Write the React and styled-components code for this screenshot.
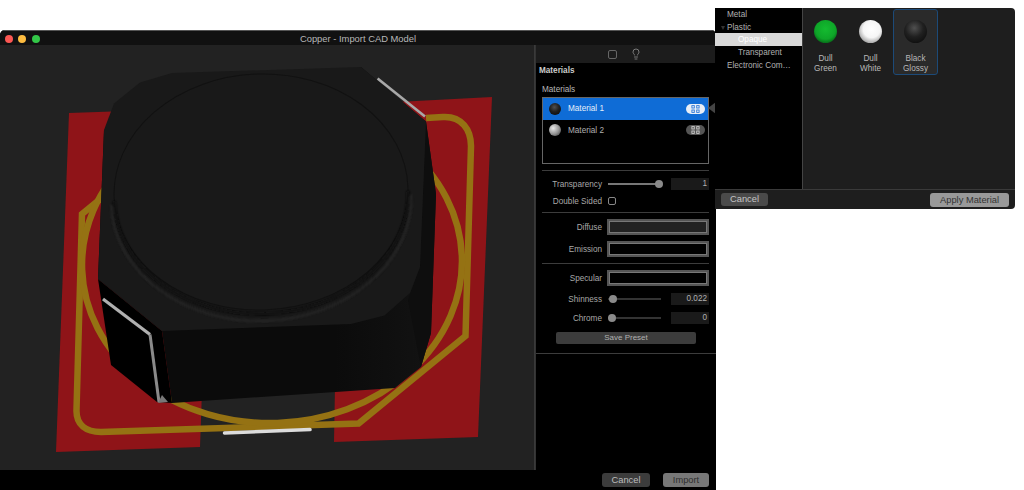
import React from 'react';
import styled, { createGlobalStyle } from 'styled-components';
import { Lightbulb } from 'lucide-react';

const Global = createGlobalStyle`
  html, body { margin: 0; padding: 0; background: #fff; }
  body { font-family: "Liberation Sans", Arial, sans-serif; }
  * { box-sizing: border-box; }
`;

const Page = styled.div`
  position: relative;
  width: 1024px;
  height: 490px;
  padding-top: 30px;
  overflow: hidden;
`;

const MainWindow = styled.div`
  width: 716px;
  height: 460px;
  display: flex;
  flex-direction: column;
  background: #000;
  border-radius: 5px 5px 0 0;
  overflow: hidden;
`;

const TitleBar = styled.div`
  position: relative;
  height: 15px;
  flex: none;
  display: flex;
  align-items: center;
  justify-content: center;
  background: #111;
  border-top: 1px solid #555;
  color: #b8b8b8;
  font-size: 9.4px;
`;

const Lights = styled.div`
  position: absolute;
  left: 5px;
  top: 3.5px;
  display: flex;
  gap: 5.4px;
`;

const Light = styled.span`
  width: 8px;
  height: 8px;
  border-radius: 50%;
  background: ${p => p.$color};
`;

const Body = styled.div`
  height: 425px;
  flex: none;
  display: flex;
`;

const Viewport = styled.div`
  width: 535px;
  flex: none;
  background: #222;
  border-right: 1px solid #3a3a3a;
  svg { display: block; }
`;

const Sidebar = styled.div`
  flex: 1;
  position: relative;
  display: flex;
  flex-direction: column;
  background: #000;
  border-left: 1px solid #333;
  color: #b0b0b0;
  font-size: 8.2px;
`;

const Toolbar = styled.div`
  height: 18px;
  flex: none;
  display: flex;
  align-items: center;
  justify-content: center;
  gap: 13px;
  padding-right: 3px;
  background: #1c1c1c;
  color: #777;
`;

const SquareIcon = styled.span`
  width: 9px;
  height: 9px;
  border: 1px solid #666;
  border-radius: 2px;
`;

const MainHeading = styled.div`
  height: 14px;
  padding: 1px 0 0 3px;
  line-height: 14px;
  font-weight: bold;
  color: #cccccc;
`;

const Inner = styled.div`
  padding: 0 7px 0 6px;
`;

const SubHeading = styled.div`
  height: 14px;
  margin-top: 5px;
  padding-top: 1px;
  line-height: 14px;
  color: #b8b8b8;
`;

const MaterialList = styled.div`
  height: 67px;
  margin-top: 1px;
  border: 1px solid #666;
`;

const MaterialRow = styled.div`
  height: 21.5px;
  display: flex;
  align-items: center;
  padding: 0 3px 0 6px;
  background: ${p => (p.$selected ? '#0f6cd6' : 'transparent')};
  color: ${p => (p.$selected ? '#e4eefa' : '#b0b0b0')};
`;

const RowSphere = styled.span`
  width: 12px;
  height: 12px;
  flex: none;
  border-radius: 50%;
  margin-right: 7px;
  background: ${p => p.$fill};
`;

const Badge = styled.span`
  margin-left: auto;
  width: 19px;
  height: 10px;
  display: flex;
  align-items: center;
  justify-content: center;
  border-radius: 5px;
  background: ${p => (p.$selected ? '#e8eef6' : '#555')};
  color: ${p => (p.$selected ? '#2c78d8' : '#ccc')};
`;

const Pointer = styled.span`
  position: absolute;
  right: 0;
  top: 57px;
  width: 0;
  height: 0;
  border-style: solid;
  border-width: 6.5px 8px 6.5px 0;
  border-color: transparent #444 transparent transparent;
`;

const Separator = styled.div`
  height: 1px;
  margin-top: ${p => p.$top}px;
  background: #3c3c3c;
`;

const PropRow = styled.div`
  height: ${p => p.$height || 12}px;
  margin-top: ${p => p.$top}px;
  display: grid;
  grid-template-columns: 60px 1fr;
  column-gap: 5px;
  align-items: center;
`;

const PropLabel = styled.div`
  text-align: right;
  color: #a8a8a8;
`;

const SliderBox = styled.div`
  display: flex;
  align-items: center;
`;

const Track = styled.div`
  position: relative;
  width: 53px;
  height: 2px;
  flex: none;
  margin-left: 1px;
  background: ${p => p.$color};
`;

const Thumb = styled.span`
  position: absolute;
  top: -3px;
  left: ${p => p.$at}px;
  width: 8px;
  height: 8px;
  border-radius: 50%;
  background: #8a8a8a;
`;

const ValueBox = styled.div`
  margin-left: auto;
  width: 38px;
  height: 12px;
  padding-right: 2px;
  background: #1a1a1a;
  color: #b0b0b0;
  line-height: 12px;
  text-align: right;
`;

const CheckBox = styled.span`
  width: 8px;
  height: 8px;
  margin-left: 1px;
  border: 1px solid #888;
  border-radius: 2px;
`;

const Swatch = styled.div`
  height: 16px;
  border: 3px solid #555;
  background: ${p => p.$fill};
  outline: 1px solid #777;
  outline-offset: -3px;
`;

const SavePreset = styled.div`
  height: 12px;
  width: 140px;
  margin: 8px 0 0 14px;
  border-radius: 2px;
  background: #3c3c3c;
  color: #b0b0b0;
  font-size: 8px;
  line-height: 12px;
  text-align: center;
`;

const FullSeparator = styled.div`
  height: 1px;
  margin-top: 9px;
  background: #3c3c3c;
`;

const Footer = styled.div`
  flex: 1;
  display: flex;
  align-items: center;
  justify-content: flex-end;
  gap: 13px;
  padding: 0 7px 0 0;
  background: #000;
`;

const Button = styled.div`
  width: ${p => p.$width}px;
  height: ${p => p.$height || 14}px;
  border-radius: 3px;
  background: ${p => p.$fill};
  color: ${p => p.$ink};
  font-size: 9.3px;
  line-height: ${p => p.$height || 14}px;
  text-align: center;
`;

const Popup = styled.div`
  position: absolute;
  left: 715px;
  top: 8px;
  width: 300px;
  height: 201px;
  display: flex;
  flex-direction: column;
  background: #1e1e1e;
  border-radius: 0 4px 4px 0;
  overflow: hidden;
  font-size: 8.2px;
`;

const PopupMain = styled.div`
  height: 181px;
  flex: none;
  display: flex;
`;

const Tree = styled.div`
  width: 88px;
  flex: none;
  background: #000;
  border-right: 1px solid #444;
`;

const TreeRow = styled.div`
  position: relative;
  height: 12.7px;
  padding-left: ${p => p.$indent}px;
  line-height: 14px;
  color: ${p => (p.$selected ? '#fff' : '#b0b0b0')};
  background: ${p => (p.$selected ? '#d8d8d8' : 'transparent')};
  white-space: nowrap;
`;

const Disclosure = styled.span`
  position: absolute;
  left: 6px;
  top: 5px;
  width: 0;
  height: 0;
  border-style: solid;
  border-width: 4px 2.5px 0 2.5px;
  border-color: #333 transparent transparent transparent;
`;

const Gallery = styled.div`
  flex: 1;
  display: flex;
  align-items: flex-start;
  padding: 1px 0 0 0;
`;

const Card = styled.div`
  width: 45px;
  height: 66px;
  display: flex;
  flex-direction: column;
  align-items: center;
  padding-top: 10px;
  border-radius: 3px;
  border: 1px solid ${p => (p.$active ? '#1c4a78' : 'transparent')};
  background: ${p => (p.$active ? '#2a2a2a' : 'transparent')};
  color: #b8b8b8;
`;

const BigSphere = styled.span`
  width: 23px;
  height: 23px;
  flex: none;
  border-radius: 50%;
  background: ${p => p.$fill};
`;

const CardLabel = styled.div`
  margin-top: 11px;
  line-height: 9.5px;
  text-align: center;
`;

const PopupFooter = styled.div`
  flex: 1;
  display: flex;
  align-items: center;
  justify-content: space-between;
  padding: 0 6px;
  border-top: 1px solid #3a3a3a;
`;

const GridGlyph = () => (
  <svg width="9" height="8" viewBox="0 0 9 8" fill="none" stroke="currentColor" strokeWidth="0.9">
    <rect x="0.9" y="0.6" width="2.4" height="2.4" />
    <rect x="5.7" y="0.6" width="2.4" height="2.4" />
    <rect x="0.9" y="5" width="2.4" height="2.4" />
    <rect x="5.7" y="5" width="2.4" height="2.4" />
  </svg>
);

// the CAD model, coordinates are page pixels
const Scene = () => (
  <svg width="534" height="425" viewBox="0 45 534 425">
    <defs>
      <linearGradient id="front" x1="0" x2="1" y1="0" y2="0">
        <stop offset="0" stopColor="#0b0b0b" />
        <stop offset="0.7" stopColor="#0b0b0b" />
        <stop offset="1" stopColor="#131313" />
      </linearGradient>
      <filter id="soft" x="-5%" y="-5%" width="110%" height="110%">
        <feGaussianBlur stdDeviation="1" />
      </filter>
    </defs>
    <polygon points="69,113 56,452 200,447 212,108" fill="#8f1418" />
    <polygon points="334,442 478,437 492,97 340,105" fill="#8f1418" />
    <g fill="none" stroke="#957213" strokeWidth="6.5" strokeLinejoin="miter">
      <path d="M426,118 L443,117 C462,116 471,130 471,146 L465.5,336 L358.6,423.5 L101,432 C86,432 76,425 76.5,410 L82,214 L104,196" />
      <ellipse cx="272" cy="263" rx="190" ry="160" transform="rotate(-2 272 263)" />
    </g>
    <polygon points="104,130 98,279 162,331 172,403 395,388 421,367 431,333 436,194 426,121.5 361,67" fill="url(#front)" />
    <polygon points="98,279 162,331 172,403 157,402 111,365" fill="#000" />
    <polygon points="426,121.5 436,194 431,333 421,367 408,300 420,267" fill="#0e0e0e" />
    <polygon points="361,67 172,73 140,82.6 114,103.6 104,130 98,279 162,331 351,324 384.5,315.5 410,293 420,267 426,121.5" fill="#191919" />
    <g fill="none" transform="rotate(-2 261 192)">
      <ellipse cx="261" cy="192" rx="147" ry="118" stroke="#111" strokeWidth="1" />
      <path d="M114,196 A147,118 0 0 0 408,196" stroke="#0d0d0d" strokeWidth="3" filter="url(#soft)" />
      <path d="M111,200 A150,121 0 0 0 411,200" stroke="#272727" strokeWidth="2" filter="url(#soft)" />
    </g>
    <line x1="377.6" y1="78.4" x2="425" y2="116.4" stroke="#a8a8a8" strokeWidth="2.6" />
    <path d="M103,299 L150,334.5" stroke="#b0b0b0" strokeWidth="3.2" fill="none" />
    <path d="M150,334.5 L159,402" stroke="#8a8a8a" strokeWidth="3" fill="none" />
    <polygon points="158,403 162,395 168,402" fill="#777" />
    <line x1="224.5" y1="433" x2="310" y2="429.6" stroke="#dcdcdc" strokeWidth="3.5" strokeLinecap="round" />
  </svg>
);

const darkBall = 'radial-gradient(circle at 45% 35%, #505050 0%, #202020 45%, #050505 100%)';
const greyBall = 'radial-gradient(circle at 35% 35%, #e8e8e8 0%, #999 50%, #333 100%)';
const greenBall = 'radial-gradient(circle at 50% 40%, #14bb30 0%, #0ea528 55%, #055a14 85%, #022a08 100%)';
const whiteBall = 'radial-gradient(circle at 55% 40%, #fff 0%, #f6f6f6 45%, #999 80%, #333 100%)';

export default function App() {
  return (
    <Page>
      <Global />
      <MainWindow>
        <TitleBar>
          <Lights>
            <Light $color="#fc5753" />
            <Light $color="#fdbc40" />
            <Light $color="#33c748" />
          </Lights>
          Copper - Import CAD Model
        </TitleBar>
        <Body>
          <Viewport>
            <Scene />
          </Viewport>
          <Sidebar>
            <Toolbar>
              <SquareIcon />
              <Lightbulb size={12} strokeWidth={1.5} color="#999" />
            </Toolbar>
            <MainHeading>Materials</MainHeading>
            <Pointer />
            <Inner>
              <SubHeading>Materials</SubHeading>
              <MaterialList>
                <MaterialRow $selected>
                  <RowSphere $fill={darkBall} />
                  Material 1
                  <Badge $selected><GridGlyph /></Badge>
                </MaterialRow>
                <MaterialRow>
                  <RowSphere $fill={greyBall} />
                  Material 2
                  <Badge><GridGlyph /></Badge>
                </MaterialRow>
              </MaterialList>
              <Separator $top={6} />
              <PropRow $top={7}>
                <PropLabel>Transparency</PropLabel>
                <SliderBox>
                  <Track $color="#777"><Thumb $at={47} /></Track>
                  <ValueBox>1</ValueBox>
                </SliderBox>
              </PropRow>
              <PropRow $top={5}>
                <PropLabel>Double Sided</PropLabel>
                <SliderBox><CheckBox /></SliderBox>
              </PropRow>
              <Separator $top={5} />
              <PropRow $top={6} $height={16}>
                <PropLabel>Diffuse</PropLabel>
                <Swatch $fill="#222" />
              </PropRow>
              <PropRow $top={6} $height={16}>
                <PropLabel>Emission</PropLabel>
                <Swatch $fill="#000" />
              </PropRow>
              <Separator $top={6} />
              <PropRow $top={6} $height={16}>
                <PropLabel>Specular</PropLabel>
                <Swatch $fill="#000" />
              </PropRow>
              <PropRow $top={7}>
                <PropLabel>Shinness</PropLabel>
                <SliderBox>
                  <Track $color="#333"><Thumb $at={1} /></Track>
                  <ValueBox>0.022</ValueBox>
                </SliderBox>
              </PropRow>
              <PropRow $top={7}>
                <PropLabel>Chrome</PropLabel>
                <SliderBox>
                  <Track $color="#333"><Thumb $at={0} /></Track>
                  <ValueBox>0</ValueBox>
                </SliderBox>
              </PropRow>
              <SavePreset>Save Preset</SavePreset>
            </Inner>
            <FullSeparator />
          </Sidebar>
        </Body>
        <Footer>
          <Button $width={48} $fill="#3c3c3c" $ink="#bcbcbc">Cancel</Button>
          <Button $width={46} $fill="#777" $ink="#2e2e2e">Import</Button>
        </Footer>
      </MainWindow>

      <Popup>
        <PopupMain>
          <Tree>
            <TreeRow $indent={12}>Metal</TreeRow>
            <TreeRow $indent={12}><Disclosure />Plastic</TreeRow>
            <TreeRow $indent={23} $selected>Opaque</TreeRow>
            <TreeRow $indent={23}>Transparent</TreeRow>
            <TreeRow $indent={12}>Electronic Com…</TreeRow>
          </Tree>
          <Gallery>
            <Card>
              <BigSphere $fill={greenBall} />
              <CardLabel>Dull<br />Green</CardLabel>
            </Card>
            <Card>
              <BigSphere $fill={whiteBall} />
              <CardLabel>Dull<br />White</CardLabel>
            </Card>
            <Card $active>
              <BigSphere $fill={darkBall} />
              <CardLabel>Black<br />Glossy</CardLabel>
            </Card>
          </Gallery>
        </PopupMain>
        <PopupFooter>
          <Button $width={47} $height={13} $fill="#4a4a4a" $ink="#c4c4c4">Cancel</Button>
          <Button $width={79} $height={14} $fill="#999" $ink="#333">Apply Material</Button>
        </PopupFooter>
      </Popup>
    </Page>
  );
}
